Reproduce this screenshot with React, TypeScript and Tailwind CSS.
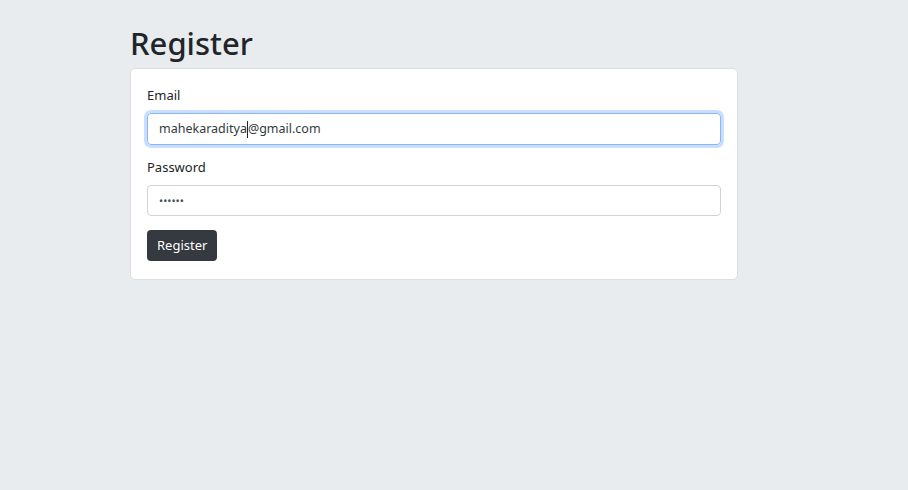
import React from 'react';

const App: React.FC = () => {
  return (
    <div
      className="min-h-screen w-full bg-[#e9ecef] text-[#212529]"
      style={{ fontFamily: '"Noto Sans", "Open Sans", sans-serif' }}
    >
      <div className="pl-[130px] pt-[24px]">
        <h1 className="mb-[6px] text-[31px] font-medium leading-[38px]">Register</h1>
        <div className="w-[608px] rounded-[5px] border border-[#dcdee0] bg-white px-4 pt-4 pb-[18px]">
          <div className="mb-[12px]">
            <label className="mb-[7px] block text-[13px] leading-[21px]">Email</label>
            <div className="flex h-[32px] items-center rounded-[4px] border border-[#86b7fe] px-[11px] text-[12.5px] text-[#343a40] shadow-[0_0_0_3px_rgba(13,110,253,0.22)]">
              <span>mahekaraditya</span>
              <span className="h-[17px] w-px bg-[#212529]" />
              <span>@gmail.com</span>
            </div>
          </div>
          <div className="mb-[14px]">
            <label className="mb-[7px] block text-[13px] leading-[21px]">Password</label>
            <input
              type="password"
              readOnly
              defaultValue="secret"
              className="block h-[31px] w-full rounded-[4px] border border-[#ced4da] px-[11px] text-[11px] text-[#495057] outline-none"
            />
          </div>
          <button className="h-[31px] rounded-[4px] bg-[#343a40] px-[10px] text-[13px] text-white">
            Register
          </button>
        </div>
      </div>
    </div>
  );
};

export default App;
